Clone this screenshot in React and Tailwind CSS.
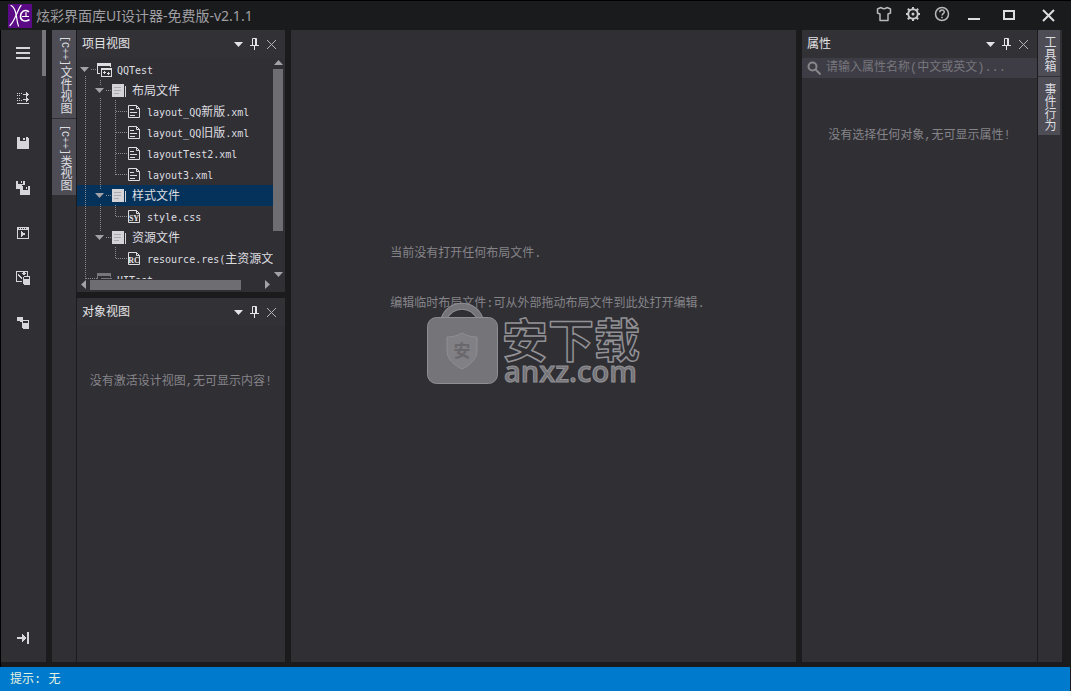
import React, { useState } from "react";

const MONO = "font-['Liberation_Mono','Noto_Sans_CJK_SC',monospace]";

const Logo = () => (
  <svg className="w-6 h-6" viewBox="0 0 24 24" fill="none" stroke="#ffffff" strokeLinecap="round">
    <rect width="24" height="24" fill="#5b0a86" stroke="none" />
    <path d="M3 1.500c2.500 1 4 4 5 8.500 1 4 1 9 2.500 12" strokeWidth="1.200" />
    <path d="M13 1.500c-2 2-3 6-5 10-2 4-3 7-6 10" strokeWidth="1.200" />
    <path d="M20.500 7.500c-4-2.500-7.500 0-8 4.500-.3 4 3.500 6.500 8.500 4" strokeWidth="1.500" />
    <path d="M14.500 12.500h6M18 8.500v3.500" strokeWidth="1.200" />
  </svg>
);

const ToolIcon = ({ name }) => (
  <svg className="w-4 h-4" viewBox="0 0 16 16" fill="#d6d5d9" shapeRendering="crispEdges">
    {name === "menu" && <path d="M1 2h14v2H1zM1 7h14v2H1zM1 12h14v2H1z" />}
    {name === "order" && (
      <path d="M2 3h1v1H2zM4 3h1v1H4zM6 3h1v1H6zM2 5h1v1H2zM4 5h1v1H4zM8 4h6v1H8zM11 2h1v5h-1zM12 3h1v3h-1zM2 8h1v1H2zM4 8h1v1H4zM2 10h1v1H2zM4 10h1v1H4zM6 10h1v1H6zM8 9h6v1H8zM11 7h1v5h-1zM12 8h1v3h-1zM2 13h12v1H2z" />
    )}
    {name === "save" && <path fillRule="evenodd" d="M2 2h10l2 2v10H2zM5 2v4h6V2zM8 3h2v2H8z" />}
    {name === "saveAll" && (
      <>
        <path fillRule="evenodd" d="M1 1h8l1 1v3H7v4H1zM3 1v3h5V1zM6 1h1v2H6z" />
        <path fillRule="evenodd" d="M5 6h2v2H5zM5 9h2v-3h7l1 1v8H5zM8 6v4h5V6zM11 7h1v2h-1z" />
      </>
    )}
    {name === "run" && (
      <path fillRule="evenodd" d="M2 2h12v12H2zM3 5v8h10V5zM4 3v1h1V3zM6 3v1h1V3zM8 3v1h1V3zM10 3v1h1V3zM6 6l5 3-5 3z" />
    )}
    {name === "image" && (
      <>
        <path d="M1 1h12v5h-1V2H2v9h5v1H1zM3 4h1v1h1v1h1v1h1v2H6V8H5V7H4V6H3zM8 2h2v3H8zM7 3h4v1H7z" />
        <path fillRule="evenodd" d="M8 7l1-1h5l1 1v7l-1 1H9l-1-1zM9 7v2h5V7z" />
      </>
    )}
    {name === "data" && (
      <>
        <path d="M2 2h6v4H2zM5 6h2v1H5z" />
        <path fillRule="evenodd" d="M7 6l1-1h5l1 1v7l-1 1H8l-1-1zM8 6v2h5V6z" />
      </>
    )}
    {name === "expand" && <path d="M2 7h5V4h1v1h1v1h1v1h1v2h-1v1H9v1H8v1H7V9H2zM12 2h2v12h-2z" />}
  </svg>
);

const ProjectIcon = ({ dim }) => (
  <svg className="w-4 h-4 shrink-0" viewBox="0 0 16 16" fill={dim ? "#77767a" : "#dedde0"} shapeRendering="crispEdges">
    <path d="M0 1h14v4h-1V4H1v7h2v1H0z" />
    <path fillRule="evenodd" d="M4 6h11v9H4zM5 8v6h9V8zM7 9h1v1h1v1H8v1H7v-1H6v-1h1zM11 10h1v1h1v1h-1v1h-1v-1h-1v-1h1z" />
  </svg>
);

const FolderIcon = () => (
  <svg className="w-4 h-4 shrink-0" viewBox="0 0 16 16" fill="#d4d3d7" shapeRendering="crispEdges">
    <path d="M0 1h12v13H0zM13 3h1v11h-1z" />
    <path d="M2 4h7v1H2zM2 7h7v1H2zM2 10h5v1H2z" fill="#aaa9ae" />
  </svg>
);

const FileIcon = ({ tag }) => (
  <svg className="w-4 h-4 shrink-0" viewBox="0 0 16 16" fill="none" stroke="#dedde0">
    <path d="M1.500 1.500h8l3 3v9h-11zM9.500 1.500v3h3" />
    {tag ? (
      <text x="7" y="12" textAnchor="middle" fontSize="8" fontWeight="bold" fill="#e6e6e8" stroke="none" fontFamily="Liberation Serif">
        {tag}
      </text>
    ) : (
      <path d="M3 5.500h4M3 8.500h7M3 11.500h5" />
    )}
  </svg>
);

const PanelHeader = ({ title }) => (
  <div className="flex items-center h-7 pl-1 pr-[6px] bg-[#323136] text-xs text-[#e4e4e6]">
    <h2 className="flex-1 pl-px">{title}</h2>
    <button type="button" aria-label="菜单" className="w-4 h-4 flex items-center justify-center">
      <svg className="w-[9px] h-[5px]" viewBox="0 0 9 5" fill="#e4e4e6"><path d="M0 0h9L4.500 5z" /></svg>
    </button>
    <button type="button" aria-label="固定" className="w-4 h-4 flex items-center justify-center">
      <svg className="w-[9px] h-3" viewBox="0 0 9 12" fill="none" stroke="#e4e4e6">
        <path d="M2.500 7V.500h4V7M0 7.500h9M4.500 8v4M5.500 1v6" />
      </svg>
    </button>
    <button type="button" aria-label="关闭" className="w-4 h-4 ml-px flex items-center justify-center">
      <svg className="w-[9px] h-[9px]" viewBox="0 0 9 9" stroke="#b4b3b8"><path d="M0 0l9 9M9 0L0 9" /></svg>
    </button>
  </div>
);

const SideTab = ({ children, className }) => (
  <button type="button" className={`[writing-mode:vertical-rl] flex items-center text-xs text-[#dddde0] bg-[#4e4d55] ${className}`}>
    {children}
  </button>
);

const tools = [
  ["menu", "菜单"],
  ["order", "顺序"],
  ["save", "保存"],
  ["saveAll", "全部保存"],
  ["run", "运行"],
  ["image", "图片资源"],
  ["data", "数据"],
];

const rows = [
  { level: 0, type: "project", name: "QQTest" },
  { level: 1, type: "folder", name: "布局文件" },
  { level: 2, type: "file", name: "layout_QQ新版.xml" },
  { level: 2, type: "file", name: "layout_QQ旧版.xml" },
  { level: 2, type: "file", name: "layoutTest2.xml" },
  { level: 2, type: "file", name: "layout3.xml" },
  { level: 1, type: "folder", name: "样式文件" },
  { level: 2, type: "file", tag: "SY", name: "style.css" },
  { level: 1, type: "folder", name: "资源文件" },
  { level: 2, type: "file", tag: "RC", name: "resource.res(主资源文" },
  { level: 0, type: "project", name: "UITest", dim: true },
];

const indents = ["pl-[3px]", "pl-[18px]", "pl-[33px]"];

// Latin parts are set smaller so they take half of a Chinese character
const Label = ({ text }) =>
  text.split(/([\x20-\x7e]+)/).filter(Boolean).map((part, i) =>
    /[\x20-\x7e]/.test(part) ? (
      <span key={i} className="font-['DejaVu_Sans_Mono',monospace] text-[10px]">{part}</span>
    ) : (
      <span key={i}>{part}</span>
    )
  );

const TreeRow = ({ row, selected, onSelect }) => (
  <li>
    <button
      type="button"
      onClick={onSelect}
      className={`w-full h-[21px] flex items-center whitespace-nowrap text-xs text-left text-[#dedee0] ${indents[row.level]} ${selected ? "bg-[#04325a]" : ""}`}
    >
      <span className="w-[17px] shrink-0">
        {row.type !== "file" && !row.dim && (
          <svg className="w-[9px] h-[5px]" viewBox="0 0 9 5" fill="#a3a2a6"><path d="M0 0h9L4.500 5z" /></svg>
        )}
      </span>
      {row.type === "project" && <ProjectIcon dim={row.dim} />}
      {row.type === "folder" && <FolderIcon />}
      {row.type === "file" && <FileIcon tag={row.tag} />}
      <span className="pl-1"><Label text={row.name} /></span>
    </button>
  </li>
);

const TreeLines = () => (
  <svg className="absolute left-0 top-0 w-[196px] h-[222px] pointer-events-none" viewBox="0 0 196 222" fill="none" stroke="#8a898e" strokeDasharray="1 1" shapeRendering="crispEdges">
    <path d="M8.500 18v204M23.500 22v5M23.500 40v92M23.500 146v28" />
    <path d="M38.500 42v75M38.500 147v12M38.500 189v12" />
    <path d="M14 11.500h6M29 32.500h6M29 137.500h6M29 179.500h6" />
    <path d="M39 53.500h11M39 74.500h11M39 95.500h11M39 116.500h11M39 158.500h11M39 200.500h11M9 220.500h11" />
  </svg>
);

const Watermark = () => (
  <svg className="absolute left-[134px] top-[272px] w-[220px] h-[86px]" viewBox="0 0 220 86">
    <defs>
      <filter id="outline">
        <feMorphology in="SourceGraphic" operator="erode" radius="1" result="inner" />
        <feComposite in="SourceGraphic" in2="inner" operator="out" />
      </filter>
    </defs>
    <path d="M19 17C25 0 49 0 55 17" fill="none" stroke="#8f8e92" strokeWidth="7" />
    <path d="M19 17C25 0 49 0 55 17" fill="none" stroke="#757478" strokeWidth="5" />
    <rect x="2.500" y="15.500" width="70" height="66" rx="9" fill="#757478" stroke="#8f8e92" />
    <path d="M37 31c5 3 10 4 15 4v14c0 8-7 14-15 18-8-4-15-10-15-18V35c5 0 10-1 15-4z" fill="#818084" stroke="#8f8e92" />
    <text x="37" y="55" textAnchor="middle" fontSize="17" fontWeight="bold" fill="#69686c" fontFamily="Noto Sans CJK SC">安</text>
    <text x="77" y="55" fontSize="46" fontWeight="bold" fill="none" stroke="#929195" strokeWidth="1.500" strokeLinejoin="round" fontFamily="Noto Sans CJK SC">安下载</text>
    <text x="79" y="80" fontSize="29" fontWeight="600" fill="#757478" stroke="#929195" strokeWidth="1" fontFamily="Open Sans">anxz.com</text>
  </svg>
);

const TitleBar = () => (
  <header className="h-[30px] shrink-0 flex items-center pl-2 pr-4 border-t border-black bg-[#1a1b1d]">
    <Logo />
    <h1 className="flex-1 pl-1 text-sm text-[#a09fa3]">炫彩界面库UI设计器-免费版-v2.1.1</h1>
    <div className="flex items-center pb-1">
      <button type="button" aria-label="皮肤" className="mr-[13px]">
        <svg className="w-4 h-4" viewBox="0 0 16 16" fill="none" stroke="#b9b8bc" strokeWidth="1.500" strokeLinejoin="round">
          <path d="M5 1.500L1.500 3v4L4 8v6.500h8V8l2.500-1V3L11 1.500c-1 1.500-5 1.500-6 0z" />
        </svg>
      </button>
      <button type="button" aria-label="设置" className="mr-[13px]">
        <svg className="w-4 h-4" viewBox="0 0 16 16" fill="none" stroke="#c9c8cc">
          <circle cx="8" cy="8" r="4.800" strokeWidth="2" />
          <circle cx="8" cy="8" r="1.500" fill="#c9c8cc" stroke="none" />
          <path d="M8 1v3M8 12v3M1 8h3M12 8h3M2.800 2.800l2 2M11.200 11.200l2 2M13.200 2.800l-2 2M4.800 11.200l-2 2" strokeWidth="2" />
        </svg>
      </button>
      <button type="button" aria-label="帮助" className="mr-[18px]">
        <svg className="w-4 h-4" viewBox="0 0 16 16" fill="none" stroke="#b9b8bc" strokeWidth="1.500">
          <circle cx="8" cy="8" r="6.500" />
          <path d="M5.800 6.300c0-3 4.500-3 4.500-.2C10.300 7.600 8 7.700 8 9.600M8 10.700v1.500" />
        </svg>
      </button>
    </div>
    <button type="button" aria-label="最小化" className="mr-[23px]">
      <svg className="w-3 h-3" viewBox="0 0 12 12" fill="#dddde0"><path d="M0 8h12v2H0z" /></svg>
    </button>
    <button type="button" aria-label="最大化" className="mr-[27px]">
      <svg className="w-3 h-3" viewBox="0 0 12 12" fill="none" stroke="#dddde0" strokeWidth="2"><path d="M1 1h10v8H1z" /></svg>
    </button>
    <button type="button" aria-label="关闭">
      <svg className="w-[13px] h-[13px]" viewBox="0 0 13 13" stroke="#dddde0" strokeWidth="2"><path d="M1 1l11 11M12 1L1 12" /></svg>
    </button>
  </header>
);

export default function App() {
  const [selected, setSelected] = useState(6);

  return (
    <div className="h-screen flex flex-col overflow-hidden bg-[#1b1b1d] font-['Noto_Sans','Noto_Sans_CJK_SC',sans-serif]">
      <TitleBar />

      <main className="flex-1 min-h-0 flex pb-[5px] pr-[9px] border-l border-black">
        {/* toolbar */}
        <nav className="w-[45px] shrink-0 flex bg-[#302f34]">
          <div className="flex-1 flex flex-col items-center pt-[15px] pb-4 pl-[3px] gap-[29px]">
            {tools.map(([name, label]) => (
              <button key={name} type="button" aria-label={label}><ToolIcon name={name} /></button>
            ))}
            <button type="button" aria-label="展开" className="mt-auto"><ToolIcon name="expand" /></button>
          </div>
          <div className="w-1 h-[46px] bg-[#77767a]" />
        </nav>

        <div className="w-6 shrink-0 ml-[6px] mr-px flex flex-col gap-px bg-[#302f34]">
          <SideTab className={`h-22 pt-[6px] ${MONO}`}><span><span className="text-[10px]">[C++]</span>文件视图</span></SideTab>
          <SideTab className={`h-19 pt-[6px] ${MONO}`}><span><span className="text-[10px]">[C++]</span>类视图</span></SideTab>
        </div>

        <div className="w-[208px] shrink-0 flex flex-col gap-[6px]">
          <section className="h-[262px] flex flex-col bg-[#302f34]">
            <PanelHeader title="项目视图" />
            <div className="flex flex-1 min-h-0">
              <div className="flex-1 min-w-0 flex flex-col">
                <div className="relative flex-1 min-h-0 overflow-hidden pt-px">
                  <ul>
                    {rows.map((row, i) => (
                      <TreeRow key={row.name} row={row} selected={selected === i} onSelect={() => setSelected(i)} />
                    ))}
                  </ul>
                  <TreeLines />
                </div>
                <div className="h-[13px] pb-[2px] flex items-center gap-1 pl-1">
                  <svg className="w-[5px] h-[9px]" viewBox="0 0 5 9" fill="#a3a2a6"><path d="M5 0v9L0 4.500z" /></svg>
                  <div className="w-[151px] h-[10px] bg-[#6e6d71]" />
                  <svg className="w-[5px] h-[9px] ml-5" viewBox="0 0 5 9" fill="#a3a2a6"><path d="M0 0v9l5-4.500z" /></svg>
                </div>
              </div>
              <div className="w-3 pr-[2px] flex flex-col items-center pt-[2px] pb-[15px]">
                <svg className="w-[9px] h-[5px] shrink-0" viewBox="0 0 9 5" fill="#a3a2a6"><path d="M0 5h9L4.500 0z" /></svg>
                <div className="w-[10px] h-[162px] mt-1 bg-[#6e6d71]" />
                <svg className="w-[9px] h-[5px] mt-auto shrink-0" viewBox="0 0 9 5" fill="#a3a2a6"><path d="M0 0h9L4.500 5z" /></svg>
              </div>
            </div>
          </section>

          <section className="flex-1 bg-[#302f34]">
            <PanelHeader title="对象视图" />
            <p className={`pt-12 text-center text-xs text-[#858489] ${MONO}`}>没有激活设计视图,无可显示内容!</p>
          </section>
        </div>

        {/* design area */}
        <section className={`relative flex-1 mx-[6px] pt-54 pl-2 flex flex-col items-center bg-[#302f34] text-xs text-[#858489] ${MONO}`}>
          <div className="flex flex-col gap-[34px]">
            <p>当前没有打开任何布局文件.</p>
            <p>编辑临时布局文件:可从外部拖动布局文件到此处打开编辑.</p>
          </div>
          <Watermark />
        </section>

        <section className="w-[235px] shrink-0 bg-[#302f34]">
          <PanelHeader title="属性" />
          <label className="flex items-center h-5 px-[5px] gap-[5px] bg-[#3e3d46]">
            <svg className="w-[14px] h-[14px]" viewBox="0 0 14 14" fill="none" stroke="#88878b" strokeWidth="2">
              <circle cx="5.500" cy="5.500" r="4" />
              <path d="M8.500 8.500l5 5" />
            </svg>
            <input
              type="text"
              aria-label="属性名称"
              placeholder="请输入属性名称(中文或英文)..."
              className={`flex-1 min-w-0 h-5 text-xs text-[#dedee0] placeholder:text-[#77767c] outline-none ${MONO}`}
            />
          </label>
          <p className={`pt-[50px] text-center text-xs text-[#858489] ${MONO}`}>没有选择任何对象,无可显示属性!</p>
        </section>

        <div className="w-6 shrink-0 ml-px flex flex-col gap-px bg-[#302f34]">
          <SideTab className="w-[22px] h-[46px] pt-[6px]">工具箱</SideTab>
          <SideTab className="w-[22px] h-[58px] pt-[6px]">事件行为</SideTab>
        </div>
      </main>

      <footer className={`h-6 shrink-0 flex items-center pt-px pl-[10px] mr-px bg-[#007acc] text-xs text-[#e6f3e0] ${MONO}`}>
        提示: 无
      </footer>
    </div>
  );
}
